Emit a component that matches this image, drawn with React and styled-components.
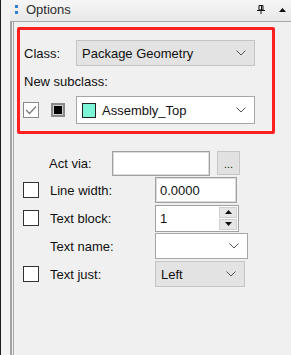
import React from 'react';
import styled, { createGlobalStyle } from 'styled-components';

const GlobalStyle = createGlobalStyle`
  html, body { margin: 0; padding: 0; background: #f0f0f0; }
  body {
    font-family: "Liberation Sans", Arial, sans-serif;
    font-size: 13px;
    color: #111;
  }
`;

const Frame = styled.div`
  display: flex;
  width: 291px;
  height: 355px;
  overflow: hidden;
  background: #f0f0f0;
`;

const Gutter = styled.div`
  width: 9px;
  border-left: 1px solid #1e1e1e;
  background: #f4f4f4;
`;

const Panel = styled.div`
  flex: 1;
  display: flex;
  flex-direction: column;
`;

const Header = styled.div`
  height: 21px;
  display: flex;
  align-items: center;
  padding: 0 5px;
  background: linear-gradient(#f6f6f6, #e8e8e8);
  border-bottom: 1px solid #a8a8a8;
`;

const Grip = styled.div`
  display: flex;
  flex-direction: column;
  gap: 3px;
  margin-right: 8px;
  margin-top: -3px;
  span {
    width: 3px;
    height: 3px;
    background: #2f7fd8;
  }
`;

const Title = styled.div`
  flex: 1;
  font-size: 13px;
  color: #2c2c2c;
  margin-top: -3px;
`;

const HeaderIcons = styled.div`
  display: flex;
  align-items: center;
  gap: 14px;
  margin-top: -2px;
`;

const Body = styled.div`
  flex: 1;
  border-left: 2px solid #a3a3a3;
  box-shadow: inset 1px 0 #f0f0f0, inset 2px 0 #a8a8a8;
  padding: 5px 16px 0 5px;
`;

const Highlight = styled.div`
  border: 3px solid #ff1f1f;
  border-radius: 2px;
  padding: 10px 17px 7px 4px;
`;

const ClassRow = styled.div`
  display: flex;
  align-items: center;
  height: 26px;
`;

const ClassLabel = styled.div`
  width: 52px;
`;

const Caption = styled.div`
  margin-top: 8px;
  height: 15px;
  line-height: 15px;
`;

const SubRow = styled.div`
  display: flex;
  align-items: center;
  margin-top: 7px;
  height: 28px;
`;

const Check = styled.div`
  box-sizing: border-box;
  width: 16px;
  height: 16px;
  margin-left: ${p => p.$offset || 0}px;
  background: #fff;
  border: 1px solid ${p => (p.$muted ? '#8a8a8a' : '#333')};
  display: flex;
  align-items: center;
  justify-content: center;
`;

const ColorChip = styled.div`
  box-sizing: border-box;
  width: 14px;
  height: 14px;
  margin-left: 12px;
  border: 2px solid #8a8a8a;
  background: #000;
  box-shadow: inset 0 0 0 1px #cfcfcf;
`;

const Combo = styled.div`
  box-sizing: border-box;
  display: flex;
  align-items: center;
  width: ${p => (p.$width ? `${p.$width}px` : 'auto')};
  flex: ${p => (p.$width ? 'none' : 1)};
  height: ${p => p.$height || 26}px;
  margin-left: ${p => p.$ml || 0}px;
  padding: 0 8px 0 ${p => p.$pl || 5}px;
  background: ${p => (p.$white ? '#fff' : '#e3e3e3')};
  border: 1px solid ${p => (p.$white ? '#a6a6a6' : '#c4c4c4')};
`;

const ComboText = styled.div`
  flex: 1;
  white-space: nowrap;
`;

const Swatch = styled.div`
  box-sizing: border-box;
  width: 14px;
  height: 15px;
  margin-right: 6px;
  background: #7cf5d6;
  border: 1px solid #222;
`;

const Rows = styled.div`
  margin-top: 17px;
  padding-left: 6px;
  display: flex;
  flex-direction: column;
  gap: 2px;
`;

const Row = styled.div`
  display: flex;
  align-items: center;
  height: ${p => p.$height || 26}px;
`;

const CheckSlot = styled.div`
  width: 27px;
  display: flex;
`;

const Label = styled.div`
  box-sizing: border-box;
  width: ${p => p.$width}px;
  padding-left: ${p => p.$indent || 0}px;
  flex: none;
  white-space: nowrap;
`;

const Field = styled.div`
  box-sizing: border-box;
  width: ${p => p.$width}px;
  height: ${p => p.$height || 26}px;
  padding-left: 4px;
  display: flex;
  align-items: center;
  background: #fff;
  border: 1px solid #a0a0a0;
  box-shadow: inset 0 0 0 1px #dcdcdc;
`;

const DotsButton = styled.div`
  box-sizing: border-box;
  width: 23px;
  height: 24px;
  margin-left: 7px;
  background: #e1e1e1;
  border: 1px solid #c6c6c6;
  display: flex;
  align-items: flex-end;
  justify-content: center;
  padding-bottom: 4px;
  font-size: 11px;
  line-height: 11px;
`;

const Spinner = styled.div`
  box-sizing: border-box;
  width: 84px;
  height: 27px;
  display: flex;
  background: #fff;
  border: 1px solid #a0a0a0;
`;

const SpinText = styled.div`
  flex: 1;
  padding-left: 4px;
  display: flex;
  align-items: center;
`;

const SpinButtons = styled.div`
  width: 18px;
  margin: 1px 1px 1px 0;
  display: flex;
  flex-direction: column;
  gap: 1px;
`;

const SpinButton = styled.div`
  flex: 1;
  background: #e6e6e6;
  border: 1px solid #cfcfcf;
  display: flex;
  align-items: center;
  justify-content: center;
`;

const Chevron = () => (
  <svg width="10" height="6" viewBox="0 0 10 6">
    <path d="M0.5 0.5 L5 5 L9.5 0.5" fill="none" stroke="#555" strokeWidth="1" />
  </svg>
);

const Tick = () => (
  <svg width="12" height="10" viewBox="0 0 12 10">
    <path d="M1 5 L4.5 8.5 L11 1.5" fill="none" stroke="#7a7a7a" strokeWidth="1.3" />
  </svg>
);

const Arrow = ({ up }) => (
  <svg width="7" height="4" viewBox="0 0 7 4">
    <path d={up ? 'M0 4 L3.5 0 L7 4 Z' : 'M0 0 L3.5 4 L7 0 Z'} fill="#111" />
  </svg>
);

const Pin = () => (
  <svg width="8" height="9" viewBox="0 0 8 9">
    <path d="M2 0.5 H6 V5 H2 Z" fill="none" stroke="#111" strokeWidth="1" />
    <path d="M0 5.5 H8" stroke="#111" strokeWidth="1" />
    <path d="M4 6 V9" stroke="#111" strokeWidth="1" />
    <path d="M4.5 1 V5" stroke="#111" strokeWidth="1" />
  </svg>
);

export default function App() {
  return (
    <>
      <GlobalStyle />
      <Frame>
        <Gutter />
        <Panel>
          <Header>
            <Grip>
              <span />
              <span />
            </Grip>
            <Title>Options</Title>
            <HeaderIcons>
              <Pin />
              <Arrow up />
            </HeaderIcons>
          </Header>
          <Body>
            <Highlight>
              <ClassRow>
                <ClassLabel>Class:</ClassLabel>
                <Combo>
                  <ComboText>Package Geometry</ComboText>
                  <Chevron />
                </Combo>
              </ClassRow>
              <Caption>New subclass:</Caption>
              <SubRow>
                <Check $muted $offset={-1}>
                  <Tick />
                </Check>
                <ColorChip />
                <Combo $white $height={28} $ml={11} $pl={5}>
                  <Swatch />
                  <ComboText>Assembly_Top</ComboText>
                  <Chevron />
                </Combo>
              </SubRow>
            </Highlight>
            <Rows>
              <Row $height={24}>
                <Label $width={89} $indent={26}>Act via:</Label>
                <Field $width={98} $height={25} />
                <DotsButton>...</DotsButton>
              </Row>
              <Row>
                <CheckSlot><Check /></CheckSlot>
                <Label $width={105}>Line width:</Label>
                <Field $width={82}>0.0000</Field>
              </Row>
              <Row>
                <CheckSlot><Check /></CheckSlot>
                <Label $width={105}>Text block:</Label>
                <Spinner>
                  <SpinText>1</SpinText>
                  <SpinButtons>
                    <SpinButton><Arrow up /></SpinButton>
                    <SpinButton><Arrow /></SpinButton>
                  </SpinButtons>
                </Spinner>
              </Row>
              <Row>
                <CheckSlot />
                <Label $width={105}>Text name:</Label>
                <Combo $white $width={93}>
                  <ComboText />
                  <Chevron />
                </Combo>
              </Row>
              <Row>
                <CheckSlot><Check /></CheckSlot>
                <Label $width={105}>Text just:</Label>
                <Combo $width={90}>
                  <ComboText>Left</ComboText>
                  <Chevron />
                </Combo>
              </Row>
            </Rows>
          </Body>
        </Panel>
      </Frame>
    </>
  );
}
